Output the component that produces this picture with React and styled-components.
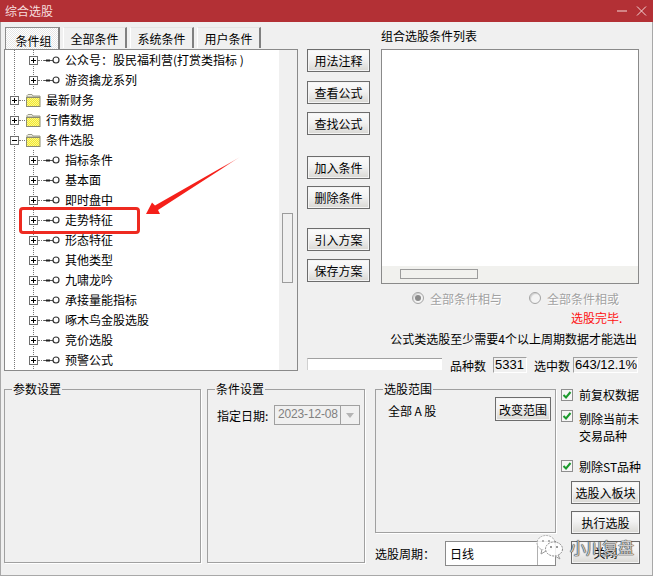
import styled, { createGlobalStyle } from 'styled-components';

const GlobalStyle = createGlobalStyle`
	html, body {
		margin: 0;
		padding: 0;
		background: #f0f0f0;
		overflow: hidden;
	}
	* {
		box-sizing: border-box;
	}
`;

const treeRows = [
	{ level: 2, label: '公众号：股民福利营(打赏类指标 )' },
	{ level: 2, label: '游资擒龙系列' },
	{ level: 1, label: '最新财务' },
	{ level: 1, label: '行情数据' },
	{ level: 1, label: '条件选股', open: true },
	{ level: 2, label: '指标条件' },
	{ level: 2, label: '基本面' },
	{ level: 2, label: '即时盘中' },
	{ level: 2, label: '走势特征' },
	{ level: 2, label: '形态特征' },
	{ level: 2, label: '其他类型' },
	{ level: 2, label: '九啸龙吟' },
	{ level: 2, label: '承接量能指标' },
	{ level: 2, label: '啄木鸟金股选股' },
	{ level: 2, label: '竞价选股' },
	{ level: 2, label: '预警公式' },
];

const KeyIcon = () => (
	<svg width='16' height='10' viewBox='0 0 16 10'>
		<path d='M0 5.5H9' stroke='#555' strokeWidth='1' />
		<path d='M2 5.5H6' stroke='#222' strokeWidth='2' />
		<circle cx='12' cy='5' r='3' fill='#fff' stroke='#333' strokeWidth='1.2' />
	</svg>
);

const FolderIcon = () => (
	<FolderSvg width='15' height='13' viewBox='0 0 15 13'>
		<defs>
			<pattern id='dither' width='2' height='2' patternUnits='userSpaceOnUse'>
				<rect width='2' height='2' fill='#f3e92e' />
				<rect width='1' height='1' fill='#fbf690' />
				<rect x='1' y='1' width='1' height='1' fill='#fbf690' />
			</pattern>
		</defs>
		<path d='M1 3V1.5L2 .5H6L7 2H14V3Z' fill='#eeeee2' stroke='#9a9a88' />
		<rect x='.5' y='3.5' width='13.5' height='9' fill='url(#dither)' stroke='#8c8c70' />
	</FolderSvg>
);

const CheckMark = () => (
	<svg width='10' height='10' viewBox='0 0 10 10'>
		<path d='M1.5 5L4 7.5L8.5 2' fill='none' stroke='#1b9a2c' strokeWidth='2' />
	</svg>
);

const App = () => {
	return (
		<Window>
			<GlobalStyle />
			<TitleBar>
				<TitleText>综合选股</TitleText>
				<svg width='30' height='12' viewBox='0 0 30 12'>
					<path d='M0 6H10' stroke='#f3d6d6' strokeWidth='1' />
					<path d='M20 1.5L29 10.5M29 1.5L20 10.5' stroke='#f3d6d6' strokeWidth='1' />
				</svg>
			</TitleBar>

			<TopSection>
				<TreeColumn>
					<Tabs>
						<Tab $active $width={55}>条件组</Tab>
						<Tab $width={64}>全部条件</Tab>
						<Tab $width={64}>系统条件</Tab>
						<Tab $width={64}>用户条件</Tab>
					</Tabs>
					<TreeBox>
						<TreeList>
							{treeRows.map((row) => (
								<TreeRow key={row.label} $level={row.level}>
									<Expander $open={row.open} />
									<Connector />
									{row.level === 1 ? <FolderIcon /> : <KeyIcon />}
									<TreeLabel>{row.label}</TreeLabel>
								</TreeRow>
							))}
						</TreeList>
						<TreeScroll>
							<TreeThumb />
						</TreeScroll>
					</TreeBox>
				</TreeColumn>

				<Side>
					<SideTop>
						<ButtonColumn>
							<ActionButton>用法注释</ActionButton>
							<ActionButton $top={9}>查看公式</ActionButton>
							<ActionButton $top={8}>查找公式</ActionButton>
							<ActionButton $top={21}>加入条件</ActionButton>
							<ActionButton $top={7}>删除条件</ActionButton>
							<ActionButton $top={19}>引入方案</ActionButton>
							<ActionButton $top={8}>保存方案</ActionButton>
						</ButtonColumn>
						<ListColumn>
							<ListTitle>组合选股条件列表</ListTitle>
							<ListBox>
								<ListScroll>
									<ListThumb />
								</ListScroll>
							</ListBox>
							<RadioRow>
								<Radio $checked />
								<RadioText>全部条件相与</RadioText>
								<Radio $gap />
								<RadioText>全部条件相或</RadioText>
							</RadioRow>
							<DoneText>选股完毕.</DoneText>
							<NoteText>公式类选股至少需要4个以上周期数据才能选出</NoteText>
						</ListColumn>
					</SideTop>
					<StatsRow>
						<Progress />
						<StatLabel $left={8}>品种数</StatLabel>
						<StatField $left={7} $width={34}>5331</StatField>
						<StatLabel $left={7}>选中数</StatLabel>
						<StatField $left={3} $width={65}>643/12.1%</StatField>
					</StatsRow>
				</Side>
			</TopSection>

			<BottomSection>
				<GroupBox $width={197} $height={182}>
					<GroupTitle>参数设置</GroupTitle>
				</GroupBox>
				<GroupBox $width={158} $height={182} $left={6}>
					<GroupTitle>条件设置</GroupTitle>
					<DateRow>
						<DateLabel>指定日期:</DateLabel>
						<DateCombo>
							<DateValue>2023-12-08</DateValue>
							<DateArrow />
						</DateCombo>
					</DateRow>
				</GroupBox>
				<ScopeColumn>
					<GroupBox $width={181} $height={152}>
						<GroupTitle>选股范围</GroupTitle>
						<ScopeRow>
							<ScopeText>全部<ScopeLetter>A</ScopeLetter>股</ScopeText>
							<ActionButton $width={56} $height={24}>改变范围</ActionButton>
						</ScopeRow>
					</GroupBox>
					<PeriodRow>
						<PeriodLabel>选股周期：</PeriodLabel>
						<PeriodCombo>
							<PeriodValue>日线</PeriodValue>
							<PeriodDrop />
						</PeriodCombo>
					</PeriodRow>
				</ScopeColumn>
				<OptionColumn>
					<CheckRow $top={5} $boxTop={3}>
						<CheckBox><CheckMark /></CheckBox>
						<span>前复权数据</span>
					</CheckRow>
					<CheckRow $top={7}>
						<CheckBox><CheckMark /></CheckBox>
						<span>剔除当前未<br />交易品种</span>
					</CheckRow>
					<CheckRow $top={14} $boxTop={2}>
						<CheckBox><CheckMark /></CheckBox>
						<span>剔除ST品种</span>
					</CheckRow>
					<ActionButton $width={69} $top={6}>选股入板块</ActionButton>
					<ActionButton $width={69} $top={7}>执行选股</ActionButton>
					<ActionButton $width={69} $top={7}>关闭</ActionButton>
				</OptionColumn>
			</BottomSection>

			<Highlight />
			<Arrow width='100' height='62' viewBox='0 0 100 62'>
				<defs>
					<linearGradient id='fade' x1='0' y1='1' x2='1' y2='0'>
						<stop offset='0.8' stopColor='#f5201a' />
						<stop offset='1' stopColor='#f5201a' stopOpacity='0.25' />
					</linearGradient>
				</defs>
				<path d='M2 58L8 46.5L11 49.5L96 1L14 54L16 58Z' fill='url(#fade)' />
			</Arrow>

			<Watermark>
				<svg width='28' height='26' viewBox='0 0 28 26'>
					<ellipse cx='10' cy='9' rx='9' ry='7.5' fill='#fff' fillOpacity='.85' stroke='#aaa' strokeDasharray='2 1' />
					<ellipse cx='18' cy='15' rx='8.5' ry='7' fill='#fff' fillOpacity='.85' stroke='#888' strokeDasharray='2 1' />
					<path d='M6 15L5 20L10 17M22 21L24 25L19 22' fill='#fff' stroke='#999' />
					<circle cx='7' cy='7' r='1' fill='#999' />
					<circle cx='13' cy='7' r='1' fill='#999' />
					<circle cx='15' cy='13' r='1' fill='#777' />
					<circle cx='21' cy='13' r='1' fill='#777' />
				</svg>
				<WatermarkText>小川复盘</WatermarkText>
			</Watermark>
		</Window>
	);
};
export default App;

const Window = styled.div`
	position: relative;
	display: flex;
	flex-direction: column;
	width: 653px;
	height: 576px;
	background: #f0f0f0;
	box-shadow: inset 1px 0 #a8a8a8, inset -1px 0 #a8a8a8, inset 0 -1px #a8a8a8;
	font-family: 'Noto Sans CJK SC', 'Noto Sans', sans-serif;
	font-size: 12px;
	color: #000;
	overflow: hidden;
`;

const TitleBar = styled.div`
	display: flex;
	align-items: center;
	justify-content: space-between;
	height: 22px;
	padding: 0 6px 0 5px;
	background: #b33035;
	flex-shrink: 0;
`;

const TitleText = styled.span`
	color: #f6dede;
	line-height: 22px;
`;

const TopSection = styled.div`
	display: flex;
	height: 354px;
	margin-top: 5px;
	padding-left: 4px;
	flex-shrink: 0;
`;

const TreeColumn = styled.div`
	display: flex;
	flex-direction: column;
	width: 294px;
`;

const Tabs = styled.div`
	display: flex;
	gap: 3px;
	height: 22px;
	padding-left: 1px;
`;

const Tab = styled.div`
	display: flex;
	align-items: center;
	justify-content: center;
	width: ${(p) => p.$width}px;
	height: ${(p) => (p.$active ? 22 : 21)}px;
	padding-top: ${(p) => (p.$active ? 4 : 1)}px;
	padding-left: ${(p) => (p.$active ? 3 : 0)}px;
	border-top: 1px solid ${(p) => (p.$active ? '#8c8c8c' : '#e4e4e4')};
	border-left: 1px solid ${(p) => (p.$active ? '#8c8c8c' : '#fff')};
	border-right: 2px solid #808080;
	background: ${(p) => (p.$active ? 'repeating-conic-gradient(#fff 0 25%, #e6e6e6 0 50%) 0 0 / 2px 2px' : '#f0f0f0')};
`;

const TreeBox = styled.div`
	display: flex;
	height: 322px;
	border: 1px solid #8a8a8a;
	background: #fff;
`;

const TreeList = styled.div`
	flex: 1;
	overflow: hidden;
`;

const dots = 'repeating-linear-gradient(to bottom, #777 0 1px, transparent 1px 2px)';

const TreeRow = styled.div`
	display: flex;
	align-items: center;
	height: 20px;
	padding-left: ${(p) => (p.$level === 1 ? 5 : 24)}px;
	background-image: ${dots}, ${(p) => (p.$level === 2 ? dots : 'none')};
	background-size: 1px 100%;
	background-position: 9px 0, 28px 0;
	background-repeat: no-repeat;
`;

const Expander = styled.span`
	position: relative;
	width: 9px;
	height: 9px;
	border: 1px solid #6e6e6e;
	background: #fff;
	flex-shrink: 0;
	&::before {
		content: '';
		position: absolute;
		left: 1px;
		top: 3px;
		width: 5px;
		height: 1px;
		background: #000;
	}
	&::after {
		content: '';
		display: ${(p) => (p.$open ? 'none' : 'block')};
		position: absolute;
		left: 3px;
		top: 1px;
		width: 1px;
		height: 5px;
		background: #000;
	}
`;

const Connector = styled.span`
	width: 6px;
	height: 1px;
	border-top: 1px dotted #777;
	flex-shrink: 0;
`;

const FolderSvg = styled.svg`
	margin-left: 1px;
`;

const TreeLabel = styled.span`
	margin-left: 5px;
	line-height: 20px;
	white-space: nowrap;
`;

const TreeScroll = styled.div`
	width: 18px;
	padding: 163px 0 0 3px;
	background: #f0f0f0;
	flex-shrink: 0;
`;

const TreeThumb = styled.div`
	width: 11px;
	height: 70px;
	border: 1px solid #9c9c9c;
	background: #f0f0f0;
`;

const Side = styled.div`
	display: flex;
	flex-direction: column;
	width: 332px;
	margin-left: 9px;
`;

const SideTop = styled.div`
	display: flex;
	height: 330px;
`;

const ButtonColumn = styled.div`
	display: flex;
	flex-direction: column;
	width: 63px;
	padding-top: 22px;
`;

const ActionButton = styled.button`
	display: block;
	width: ${(p) => p.$width || 63}px;
	height: ${(p) => p.$height || 23}px;
	margin: ${(p) => p.$top || 0}px 0 0 auto;
	padding: 0;
	border: 1px solid #6c6c6c;
	box-shadow: inset 0 0 0 1px #f4f4f4;
	background: linear-gradient(#fbfbfb, #f2f2f2 45%, #d9d8d4);
	font: inherit;
	color: #000;
	white-space: nowrap;
	flex-shrink: 0;
`;

const ListColumn = styled.div`
	display: flex;
	flex-direction: column;
	width: 258px;
	margin-left: 11px;
`;

const ListTitle = styled.div`
	height: 22px;
	padding-top: 1px;
	line-height: 16px;
`;

const ListBox = styled.div`
	display: flex;
	flex-direction: column;
	justify-content: flex-end;
	height: 235px;
	border: 1px solid #8a8a8a;
	background: #fff;
`;

const ListScroll = styled.div`
	height: 17px;
	padding: 3px 0 0 18px;
	background: #f1f1ee;
`;

const ListThumb = styled.div`
	width: 78px;
	height: 10px;
	border: 1px solid #9c9c9c;
`;

const RadioRow = styled.div`
	display: flex;
	align-items: center;
	height: 16px;
	margin-top: 6px;
	padding-left: 31px;
`;

const Radio = styled.span`
	display: flex;
	align-items: center;
	justify-content: center;
	width: 12px;
	height: 12px;
	margin-left: ${(p) => (p.$gap ? 27 : 0)}px;
	border: 1px solid #a4a4a4;
	border-radius: 50%;
	background: #f4f4f4;
	box-shadow: inset 1px 1px 1px #cfcfcf;
	&::after {
		content: '';
		display: ${(p) => (p.$checked ? 'block' : 'none')};
		width: 6px;
		height: 6px;
		border-radius: 50%;
		background: #8a8a8a;
	}
`;

const RadioText = styled.span`
	margin-left: 6px;
	color: #a2a2a2;
	text-shadow: 1px 1px 0 #fff;
`;

const DoneText = styled.div`
	margin: 4px 0 0 190px;
	height: 16px;
	line-height: 16px;
	color: #ff1010;
`;

const NoteText = styled.div`
	margin-top: 5px;
	height: 16px;
	padding-right: 2px;
	line-height: 16px;
	text-align: right;
	white-space: nowrap;
`;

const StatsRow = styled.div`
	display: flex;
	align-items: center;
	height: 16px;
`;

const Progress = styled.div`
	width: 135px;
	height: 12px;
	margin-bottom: 2px;
	border-top: 1px solid #a0a0a0;
	border-left: 1px solid #d0d0d0;
	background: #fff;
`;

const StatLabel = styled.span`
	margin-left: ${(p) => p.$left}px;
	width: 36px;
	white-space: nowrap;
`;

const StatField = styled.span`
	display: block;
	width: ${(p) => p.$width}px;
	height: 16px;
	margin-left: ${(p) => p.$left}px;
	padding-left: 1px;
	border-top: 1px solid #a0a0a0;
	border-left: 1px solid #a0a0a0;
	border-right: 1px solid #fff;
	border-bottom: 1px solid #fff;
	font-family: 'Liberation Sans', sans-serif;
	font-size: 13px;
	line-height: 14px;
	white-space: nowrap;
	overflow: hidden;
`;

const BottomSection = styled.div`
	display: flex;
	padding-left: 4px;
`;

const GroupBox = styled.fieldset`
	width: ${(p) => p.$width}px;
	height: ${(p) => p.$height}px;
	margin: 0 0 0 ${(p) => p.$left || 0}px;
	padding: 0;
	min-width: 0;
	border: 1px solid #a0a0a0;
	box-shadow: 1px 1px 0 #fff;
`;

const GroupTitle = styled.legend`
	margin-left: 7px;
	padding: 0 1px;
	line-height: 16px;
`;

const DateRow = styled.div`
	display: flex;
	align-items: center;
	height: 20px;
	margin-top: 8px;
	padding-left: 9px;
`;

const DateLabel = styled.span`
	width: 57px;
	white-space: nowrap;
`;

const DateCombo = styled.div`
	display: flex;
	width: 86px;
	height: 20px;
	border: 1px solid #a0a0a0;
`;

const DateValue = styled.span`
	flex: 1;
	padding-left: 3px;
	font-family: 'Liberation Sans', sans-serif;
	letter-spacing: -0.15px;
	line-height: 17px;
	color: #808080;
`;

const DateArrow = styled.span`
	display: flex;
	align-items: center;
	justify-content: center;
	width: 19px;
	border-left: 1px solid #a0a0a0;
	&::after {
		content: '';
		border: 4px solid transparent;
		border-top: 5px solid #b4b4b4;
		border-bottom: 0;
	}
`;

const ScopeColumn = styled.div`
	display: flex;
	flex-direction: column;
	width: 181px;
	margin-left: 10px;
`;

const ScopeRow = styled.div`
	display: flex;
	justify-content: space-between;
	padding: 0 4px 0 12px;
`;

const ScopeText = styled.span`
	margin-top: 6px;
	line-height: 16px;
`;

const ScopeLetter = styled.span`
	margin: 0 2.5px;
`;

const PeriodRow = styled.div`
	display: flex;
	align-items: center;
	height: 25px;
	margin-top: 8px;
`;

const PeriodLabel = styled.span`
	width: 70px;
	white-space: nowrap;
`;

const PeriodCombo = styled.div`
	display: flex;
	width: 111px;
	height: 25px;
	border: 1px solid #8a8a8a;
	background: #fff;
`;

const PeriodValue = styled.span`
	flex: 1;
	padding-left: 4px;
	line-height: 24px;
`;

const PeriodDrop = styled.span`
	width: 18px;
	border-left: 1px solid #b0b0b0;
`;

const OptionColumn = styled.div`
	display: flex;
	flex-direction: column;
	width: 79px;
	margin-left: 5px;
`;

const CheckRow = styled.div`
	display: flex;
	align-items: flex-start;
	gap: 6px;
	margin-top: ${(p) => p.$top}px;
	line-height: 17px;
	white-space: nowrap;
	> :first-child {
		margin-top: ${(p) => p.$boxTop || 0}px;
	}
`;

const CheckBox = styled.span`
	display: flex;
	align-items: center;
	justify-content: center;
	width: 12px;
	height: 12px;
	border: 1px solid #8e8e8e;
	background: #f6f6f6;
	flex-shrink: 0;
`;

const Highlight = styled.div`
	position: absolute;
	left: 19px;
	top: 207px;
	width: 121px;
	height: 27px;
	border: 3px solid #ee2a20;
	border-radius: 4px;
`;

const Arrow = styled.svg`
	position: absolute;
	left: 144px;
	top: 156px;
`;

const Watermark = styled.div`
	position: absolute;
	left: 536px;
	top: 534px;
	display: flex;
	align-items: center;
	gap: 6px;
`;

const WatermarkText = styled.span`
	font-size: 16px;
	color: rgba(255, 255, 255, 0.75);
	text-shadow: 0 0 1px #333, 0 0 1px #333, 0 0 1px #333;
	white-space: nowrap;
`;
